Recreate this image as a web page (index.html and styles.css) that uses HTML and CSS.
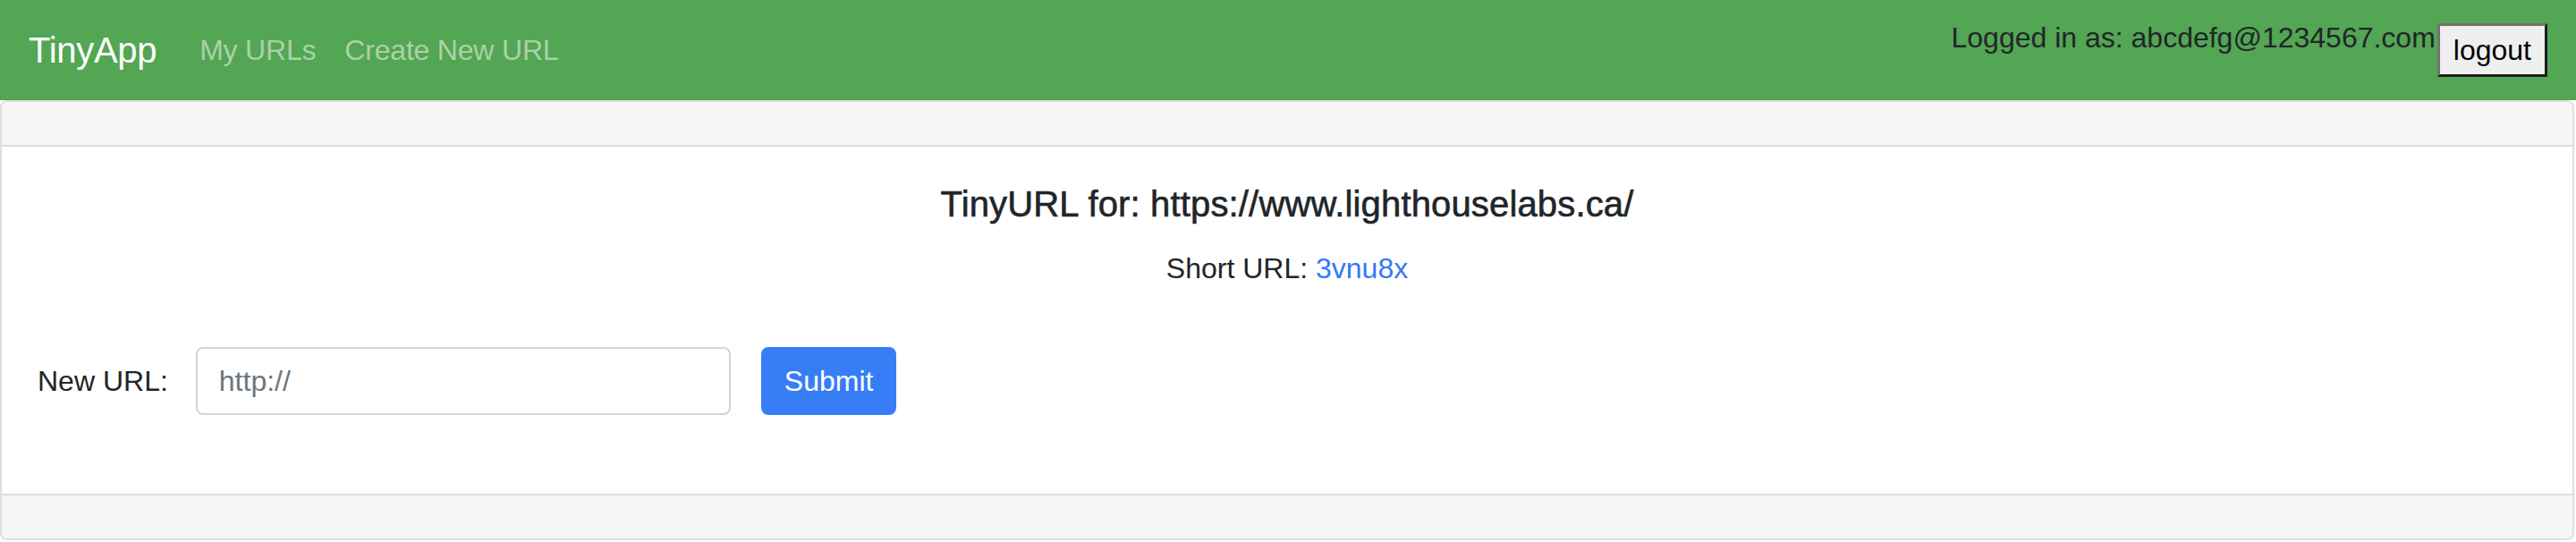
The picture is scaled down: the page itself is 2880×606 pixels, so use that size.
FILE: index.html
```html
<!DOCTYPE html>
<html lang="en">
<head>
<meta charset="utf-8">
<title>TinyApp</title>
<link rel="stylesheet" href="styles.css">
</head>
<body>
<nav class="navbar">
  <a class="brand" href="#">TinyApp</a>
  <div class="nav-links">
    <a class="nav-link" href="#">My URLs</a>
    <a class="nav-link" href="#">Create New URL</a>
  </div>
  <div class="user">
    <span class="user-text">Logged in as: abcdefg@1234567.com</span>
    <button class="logout" type="button">logout</button>
  </div>
</nav>
<main class="card">
  <div class="card-header"></div>
  <div class="card-body">
    <h5 class="card-title">TinyURL for: https://www.lighthouselabs.ca/</h5>
    <p class="card-text">Short URL: <a class="short-link" href="#">3vnu8x</a></p>
    <form class="url-form">
      <label class="url-label" for="longURL">New URL:</label>
      <input class="url-input" id="longURL" type="text" placeholder="http://">
      <button class="btn-primary" type="button">Submit</button>
    </form>
  </div>
  <div class="card-footer"></div>
</main>
</body>
</html>
```

FILE: styles.css
```css
* { box-sizing: border-box; }
html, body { margin: 0; padding: 0; }
body {
  font-family: "Liberation Sans", Arial, sans-serif;
  font-size: 32px;
  line-height: 1.5;
  color: #212529;
  background: #fff;
}

.navbar {
  display: flex;
  align-items: center;
  height: 112px;
  padding: 16px 32px;
  background: #53a653;
}
.brand {
  font-size: 40px;
  line-height: 60px;
  padding: 10px 0;
  margin-right: 32px;
  color: #fff;
  text-decoration: none;
  letter-spacing: -0.3px;
}
.nav-links { display: flex; }
.nav-link {
  padding: 16px;
  line-height: 48px;
  color: rgba(255, 255, 255, 0.5);
  text-decoration: none;
  letter-spacing: -0.2px;
}
.user {
  margin-left: auto;
  align-self: stretch;
  display: flex;
  align-items: center;
}
.user-text {
  align-self: flex-start;
  margin-top: 2px;
  line-height: 48px;
}
.logout {
  margin-left: 2px;
  font: inherit;
  line-height: 48px;
  padding: 3px 15px;
  border-width: 3px;
  border-style: solid;
  border-color: #727272 #1e1e1e #1e1e1e #727272;
  background: #efefef;
  color: #000;
}

.card {
  margin-right: 2px;
  border: 2px solid #dedede;
  border-radius: 8px;
  text-align: center;
  overflow: hidden;
}
.card-header {
  height: 50px;
  background: #f6f6f6;
  border-bottom: 2px solid #dedede;
}
.card-body {
  height: 388px;
  padding: 40px;
}
.card-title {
  margin: 0 0 24px;
  font-size: 40px;
  font-weight: 400;
  line-height: 48px;
  letter-spacing: 0.15px;
  -webkit-text-stroke: 0.6px #212529;
}
.card-text {
  margin: 0 0 32px;
  line-height: 48px;
}
.short-link {
  color: #3479f6;
  text-decoration: none;
}
.url-form {
  display: flex;
  align-items: center;
  padding: 32px 0 48px;
}
.url-label { margin-right: 31px; }
.url-input {
  width: 598px;
  height: 76px;
  margin-right: 34px;
  padding: 12px 24px;
  font: inherit;
  line-height: 48px;
  color: #495057;
  background: #fff;
  border: 2px solid #ced4da;
  border-radius: 8px;
}
.url-input::placeholder { color: #6c757d; }
.btn-primary {
  height: 76px;
  padding: 12px 24px;
  font: inherit;
  line-height: 48px;
  color: #fff;
  background: #377df6;
  border: 2px solid #377df6;
  border-radius: 8px;
}
.card-footer {
  height: 50px;
  background: #f6f6f6;
  border-top: 2px solid #dedede;
}
```
